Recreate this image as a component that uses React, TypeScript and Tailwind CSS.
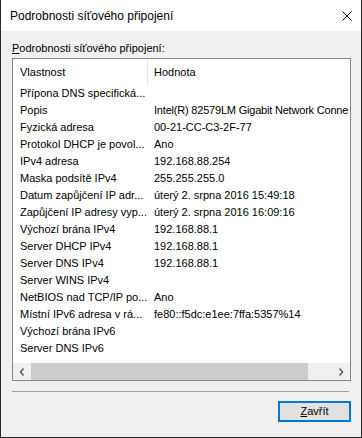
export default function App() {
  const rows: [string, string][] = [
    ["Přípona DNS specifická...", ""],
    ["Popis", "Intel(R) 82579LM Gigabit Network Conne"],
    ["Fyzická adresa", "00-21-CC-C3-2F-77"],
    ["Protokol DHCP je povol...", "Ano"],
    ["IPv4 adresa", "192.168.88.254"],
    ["Maska podsítě IPv4", "255.255.255.0"],
    ["Datum zapůjčení IP adr...", "úterý 2. srpna 2016 15:49:18"],
    ["Zapůjčení IP adresy vyp...", "úterý 2. srpna 2016 16:09:16"],
    ["Výchozí brána IPv4", "192.168.88.1"],
    ["Server DHCP IPv4", "192.168.88.1"],
    ["Server DNS IPv4", "192.168.88.1"],
    ["Server WINS IPv4", ""],
    ["NetBIOS nad TCP/IP po...", "Ano"],
    ["Místní IPv6 adresa v rá...", "fe80::f5dc:e1ee:7ffa:5357%14"],
    ["Výchozí brána IPv6", ""],
    ["Server DNS IPv6", ""],
  ];
  return (
    <div className="w-[362px] h-[438px] flex flex-col bg-[#f0f0f0] border-x border-b border-[#2b2b2b] font-['Liberation_Sans',Arial,sans-serif] text-black overflow-hidden">
      <div className="h-[31px] shrink-0 bg-white flex items-center pl-[9px] pr-[9px] text-[12px] leading-[14px]">
        <span className="flex-1">Podrobnosti síťového připojení</span>
        <svg width="10" height="10" viewBox="0 0 10 10">
          <path d="M0.5 0.5L9.5 9.5M9.5 0.5L0.5 9.5" stroke="#000" strokeWidth="1" fill="none" />
        </svg>
      </div>
      <div className="flex-1 flex flex-col text-[11px] leading-[13px]">
        <div className="pt-[11px] pl-[11px]">
          <span className="underline">P</span>odrobnosti síťového připojení:
        </div>
        <div className="mt-[3px] ml-[11px] w-[339px] h-[323px] border border-[#828790] bg-white flex flex-col overflow-hidden">
          <div className="h-[26px] shrink-0 flex">
            <div className="w-[134px] pl-[7px] pt-[7px]">Vlastnost</div>
            <div className="w-px h-full bg-[#e5e5e5]" />
            <div className="pl-[6px] pt-[7px]">Hodnota</div>
          </div>
          {rows.map(([k, v], i) => (
            <div key={i} className="h-[17px] shrink-0 flex items-center whitespace-nowrap">
              <div className="w-[135px] shrink-0 pl-[7px] overflow-hidden">{k}</div>
              <div className={i === 1 ? "pl-[6px] tracking-[-0.2px]" : "pl-[6px]"}>{v}</div>
            </div>
          ))}
          <div className="flex-1" />
          <div className="h-[17px] shrink-0 flex bg-[#f0f0f0]">
            <div className="w-[18px] flex items-center justify-center">
              <svg width="6" height="8" viewBox="0 0 6 8">
                <path d="M4.5 0.5L1.5 4L4.5 7.5" stroke="#606060" strokeWidth="1.6" fill="none" />
              </svg>
            </div>
            <div className="w-[277px] bg-[#cdcdcd]" />
            <div className="flex-1" />
            <div className="w-[18px] flex items-center justify-center">
              <svg width="6" height="8" viewBox="0 0 6 8">
                <path d="M1.5 0.5L4.5 4L1.5 7.5" stroke="#606060" strokeWidth="1.6" fill="none" />
              </svg>
            </div>
          </div>
        </div>
        <div className="mt-[10px] ml-[11px] w-[337px] h-px bg-[#a0a0a0]" />
        <div className="mt-[9px] flex justify-end pr-[10px]">
          <div className="w-[73px] h-[21px] border-2 border-[#0078d7] bg-[#e1e1e1] flex items-center justify-center">
            <span>
              <span className="underline">Z</span>avřít
            </span>
          </div>
        </div>
      </div>
    </div>
  );
}
